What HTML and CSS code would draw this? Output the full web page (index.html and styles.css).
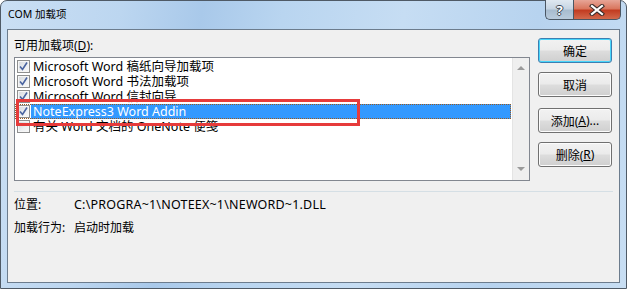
FILE: index.html
```html
<!DOCTYPE html>
<html lang="zh-CN">
<head>
    <meta charset="UTF-8">
    <title>COM 加载项</title>
    <link rel="stylesheet" href="styles.css">
</head>
<body>
    <div class="window">
        <!-- 标题栏 -->
        <div class="titlebar">
            <span class="title">COM 加载项</span>
            <div class="caption-buttons">
                <div class="cap-btn help">?</div>
                <div class="cap-btn close">
                    <svg width="16" height="12" viewBox="0 0 16 12">
                        <path d="M3 2 L13 10 M13 2 L3 10" stroke="#3a2c2a" stroke-width="4.2" stroke-linecap="square"/>
                        <path d="M3 2 L13 10 M13 2 L3 10" stroke="#ffffff" stroke-width="2.2" stroke-linecap="square"/>
                    </svg>
                </div>
            </div>
        </div>

        <!-- 客户区 -->
        <div class="client">
            <div class="top">
                <div class="left">
                    <div class="label">可用加载项(<u>D</u>):</div>
                    <div class="listbox">
                        <div class="items">
                            <div class="row">
                                <span class="check checked"></span>
                                <span class="text">Microsoft Word 稿纸向导加载项</span>
                            </div>
                            <div class="row">
                                <span class="check checked"></span>
                                <span class="text">Microsoft Word 书法加载项</span>
                            </div>
                            <div class="row">
                                <span class="check checked"></span>
                                <span class="text">Microsoft Word 信封向导</span>
                            </div>
                            <div class="row selected">
                                <span class="check checked"></span>
                                <span class="text">NoteExpress3 Word Addin</span>
                            </div>
                            <div class="row">
                                <span class="check"></span>
                                <span class="text">有关 Word 文档的 OneNote 便笺</span>
                            </div>
                        </div>
                        <div class="scrollbar">
                            <span class="arrow up"></span>
                            <span class="arrow down"></span>
                        </div>
                        <div class="mark"></div>
                    </div>
                </div>
                <div class="buttons">
                    <div class="btn default">确定</div>
                    <div class="btn">取消</div>
                    <div class="btn spaced">添加(<u>A</u>)...</div>
                    <div class="btn">删除(<u>R</u>)</div>
                </div>
            </div>

            <div class="separator"></div>

            <div class="info">
                <div class="info-row">
                    <span class="info-label">位置:</span>
                    <span class="path">C:\PROGRA~1\NOTEEX~1\NEWORD~1.DLL</span>
                </div>
                <div class="info-row">
                    <span class="info-label">加载行为:</span>
                    <span>启动时加载</span>
                </div>
            </div>
        </div>
    </div>
</body>
</html>
```

FILE: styles.css
```css
body {
    margin: 0;
    font-family: "Noto Sans", "Noto Sans CJK SC", sans-serif;
    font-size: 12px;
    color: #000;
    background: #ffffff;
}

.window {
    width: 627px;
    height: 289px;
    box-sizing: border-box;
    border: 1px solid #4f5a66;
    border-radius: 7px 7px 0 0;
    display: flex;
    flex-direction: column;
    background: linear-gradient(100deg, #cadff4 0%, #bcd6f0 18%, #a9c9ea 30%, #b9d5f0 42%, #c6ddf3 60%, #b7d3ef 80%, #c8def3 100%);
}

/* 标题栏 */
.titlebar {
    height: 28px;
    display: flex;
    justify-content: space-between;
    align-items: flex-start;
}

.title {
    margin-left: 7px;
    margin-top: 5px;
    font-size: 10.5px;
    line-height: 16px;
}

.caption-buttons {
    display: flex;
    margin-top: -1px;
    margin-right: 5px;
}

.cap-btn {
    height: 20px;
    box-sizing: border-box;
    border: 1px solid #4a5663;
    border-top: none;
    display: flex;
    justify-content: center;
    align-items: center;
}

.help {
    width: 28px;
    border-radius: 0 0 0 5px;
    border-right: none;
    background: linear-gradient(#dfe8f1 0%, #c7d5e3 45%, #a8bccf 55%, #b9cbdc 100%);
    color: #fff;
    font-weight: bold;
    font-size: 13px;
    text-shadow: 1px 0 #3b4856, -1px 0 #3b4856, 0 1px #3b4856, 0 -1px #3b4856;
}

.close {
    width: 48px;
    border-radius: 0 0 5px 0;
    background: linear-gradient(#e7a597 0%, #d9775f 45%, #c23c21 55%, #d2694c 100%);
}

/* 客户区 */
.client {
    flex: 1;
    margin: 0 6px 5px 6px;
    border: 1px solid #6c7c8d;
    background: #f0f0f0;
    display: flex;
    flex-direction: column;
}

.top {
    display: flex;
    gap: 8px;
    padding: 8px 7px 0 6px;
}

.left {
    flex: 1;
}

.label {
    line-height: 15px;
    margin-bottom: 4px;
}

.listbox {
    position: relative;
    height: 124px;
    box-sizing: border-box;
    border: 1px solid #828790;
    background: #fff;
    display: flex;
}

.items {
    flex: 1;
    padding: 1px 1px 0 0;
}

.row {
    height: 15px;
    display: flex;
    align-items: center;
    padding-left: 2px;
}

.row.selected {
    outline: 1px dotted #9a5a20;
    outline-offset: -1px;
}

.check {
    width: 13px;
    height: 13px;
    box-sizing: border-box;
    border: 1px solid #8e8f8f;
    background: linear-gradient(135deg, #d3d7dc 0%, #eef0f2 60%, #f8f8f8 100%);
    box-shadow: inset 0 0 0 1px #f6f6f6;
    flex-shrink: 0;
}

.check.checked {
    background-image: url("data:image/svg+xml;utf8,<svg xmlns='http://www.w3.org/2000/svg' width='11' height='11'><path d='M2 5.5 L4.5 8.5 L9 1.5' fill='none' stroke='%234a64a0' stroke-width='1.6'/></svg>"), linear-gradient(135deg, #d3d7dc 0%, #eef0f2 60%, #f8f8f8 100%);
}

.text {
    margin-left: 1px;
    padding: 0 2px;
    font-size: 12.5px;
    line-height: 15px;
    white-space: nowrap;
}

.selected .text {
    flex: 1;
    background: #3399ff;
    color: #fff;
}

.scrollbar {
    width: 17px;
    background: #efefef;
    border-left: 1px solid #e4e4e4;
    box-sizing: border-box;
    display: flex;
    flex-direction: column;
    justify-content: space-between;
    align-items: center;
    padding: 8px 0 9px;
}

.arrow {
    width: 0;
    height: 0;
    border-left: 4px solid transparent;
    border-right: 4px solid transparent;
}

.arrow.up {
    border-bottom: 4px solid #9a9a9a;
}

.arrow.down {
    border-top: 4px solid #9a9a9a;
}

/* 红色标注框 */
.mark {
    position: absolute;
    left: 1px;
    top: 41px;
    width: 344px;
    height: 27px;
    box-sizing: border-box;
    border: 3px solid #e63b3b;
}

/* 右侧按钮 */
.buttons {
    width: 74px;
    display: flex;
    flex-direction: column;
    gap: 9px;
}

.btn {
    height: 25px;
    box-sizing: border-box;
    border: 1px solid #707070;
    border-radius: 3px;
    background: linear-gradient(#f2f2f2 0%, #ebebeb 48%, #dddddd 52%, #cfcfcf 100%);
    box-shadow: inset 0 0 0 1px #fcfcfc;
    display: flex;
    justify-content: center;
    align-items: center;
}

.btn.default {
    border-color: #3c7fb1;
    box-shadow: inset 0 0 0 1px #48d6fb;
}

.btn.spaced {
    margin-top: 2px;
}

.separator {
    height: 1px;
    margin: 10px 6px 0;
    background: #d5dfe5;
}

.info {
    padding: 5px 6px 0;
    display: flex;
    flex-direction: column;
    gap: 7px;
}

.info-row {
    display: flex;
    line-height: 16px;
}

.info-label {
    width: 60px;
}

.path {
    font-size: 12.5px;
    letter-spacing: 0.2px;
}
```
